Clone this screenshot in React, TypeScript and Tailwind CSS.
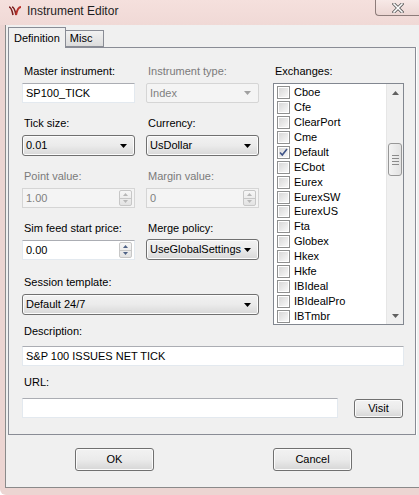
import type { ReactNode } from 'react';

const exchanges = [
  'Cboe', 'Cfe', 'ClearPort', 'Cme', 'Default', 'ECbot', 'Eurex', 'EurexSW',
  'EurexUS', 'Fta', 'Globex', 'Hkex', 'Hkfe', 'IBIdeal', 'IBIdealPro', 'IBTmbr',
];

function Arrow({ disabled }: { disabled?: boolean }) {
  return (
    <svg width="7" height="4" viewBox="0 0 7 4" className="shrink-0">
      <path d="M0 0h7L3.5 4z" fill={disabled ? '#a0a0a0' : '#000'} />
    </svg>
  );
}

function Label({ children, className = '' }: { children: ReactNode; className?: string }) {
  return <div className={`h-[14px] leading-[14px] pl-[2px] ${className}`}>{children}</div>;
}

function Combo({ value, width = 'w-[113px]', disabled }: { value: string; width?: string; disabled?: boolean }) {
  if (disabled) {
    return (
      <div className={`${width} h-[20px] flex items-center justify-between pl-[3px] pr-[7px] border border-[#d5d5d5] bg-[#f4f4f4] rounded-[2px] text-[#808080]`}>
        <span>{value}</span>
        <Arrow disabled />
      </div>
    );
  }
  return (
    <div className={`${width} h-[21px] flex items-center justify-between pl-[3px] pr-[7px] border border-[#707070] rounded-[3px] bg-gradient-to-b from-[#f2f2f2] via-[#ebebeb] to-[#d8d8d8] shadow-[inset_0_0_0_1px_#fcfcfc]`}>
      <span>{value}</span>
      <Arrow />
    </div>
  );
}

function TextBox({ value = '', width }: { value?: string; width: string }) {
  return (
    <div className={`${width} h-[20px] flex items-center pl-[3px] bg-white border border-[#e3e9ef] border-t-[#abadb3]`}>
      {value}
    </div>
  );
}

function Spin({ value, disabled }: { value: string; disabled?: boolean }) {
  const c = disabled ? '#b8b8b8' : '#4d6185';
  return (
    <div className={`w-[113px] h-[20px] flex items-center justify-between pl-[3px] pr-[2px] border ${disabled ? 'border-[#d5d5d5] bg-[#f4f4f4] text-[#808080]' : 'border-[#e3e9ef] border-t-[#abadb3] bg-white'}`}>
      <span>{value}</span>
      <div className="w-[13px] h-[16px] flex flex-col border border-[#c7c7c7] rounded-[2px] bg-gradient-to-b from-[#f7f7f7] to-[#e3e3e3]">
        <div className="flex-1 flex items-center justify-center border-b border-[#c7c7c7]">
          <svg width="5" height="3" viewBox="0 0 5 3"><path d="M2.5 0L5 3H0z" fill={c} /></svg>
        </div>
        <div className="flex-1 flex items-center justify-center">
          <svg width="5" height="3" viewBox="0 0 5 3"><path d="M0 0h5L2.5 3z" fill={c} /></svg>
        </div>
      </div>
    </div>
  );
}

function Field({ label, children, disabled }: { label: string; children: ReactNode; disabled?: boolean }) {
  return (
    <div className="flex flex-col">
      <Label className={disabled ? 'text-[#7a7a7a]' : ''}>{label}</Label>
      <div className="mt-[5px]">{children}</div>
    </div>
  );
}

function CheckBox({ checked }: { checked?: boolean }) {
  return (
    <div className="w-[13px] h-[13px] border border-[#8e8f8f] bg-white p-[1px] shrink-0">
      <div className="w-full h-full bg-gradient-to-br from-[#d8d8d8] to-[#f8f8f8] flex items-center justify-center">
        {checked && (
          <svg width="9" height="9" viewBox="0 0 9 9">
            <path d="M1 4.5l2.3 2.6L8 1" stroke="#3f5488" strokeWidth="1.6" fill="none" />
          </svg>
        )}
      </div>
    </div>
  );
}

function Button({ children, className = '' }: { children: ReactNode; className?: string }) {
  return (
    <div className={`flex items-center justify-center border border-[#707070] rounded-[3px] bg-gradient-to-b from-[#f2f2f2] via-[#ebebeb] to-[#d6d6d6] shadow-[inset_0_0_0_1px_#fbfbfb] ${className}`}>
      {children}
    </div>
  );
}

function ScrollBar() {
  return (
    <div className="w-[17px] h-full flex flex-col bg-[#f0f0f0] border-l border-[#e6e6e6]">
      <div className="h-[17px] flex items-center justify-center">
        <svg width="7" height="4" viewBox="0 0 7 4"><path d="M3.5 0L7 4H0z" fill="#606060" /></svg>
      </div>
      <div className="h-[42px]" />
      <div className="h-[33px] mx-[1px] border border-[#979797] rounded-[3px] bg-gradient-to-r from-[#f3f3f3] to-[#e2e2e2] flex flex-col items-center justify-center gap-[2px]">
        <div className="w-[7px] h-px bg-[#8a8a8a]" />
        <div className="w-[7px] h-px bg-[#8a8a8a]" />
        <div className="w-[7px] h-px bg-[#8a8a8a]" />
        <div className="w-[7px] h-px bg-[#8a8a8a]" />
      </div>
      <div className="flex-1" />
      <div className="h-[17px] flex items-center justify-center">
        <svg width="7" height="4" viewBox="0 0 7 4"><path d="M0 0h7L3.5 4z" fill="#606060" /></svg>
      </div>
    </div>
  );
}

export default function App() {
  return (
    <div
      className="w-[419px] h-[495px] overflow-hidden flex flex-col bg-[#ecd5d2] rounded-bl-[6px] text-[11px] text-black"
      style={{ fontFamily: '"Liberation Sans", Arial, sans-serif' }}
    >
      {/* Title bar */}
      <div className="h-[25px] shrink-0 flex items-start bg-gradient-to-b from-[#f5e0dd] to-[#f0d9d6]">
        <div className="flex items-center h-[22px] pl-[8px] gap-[4px]">
          <svg width="15" height="12" viewBox="0 0 15 12">
            <path d="M1 2c2 0 3 3 4 8M4 2c2 0 3 3 4 8" stroke="#7a1f1f" strokeWidth="1.6" fill="none" />
            <path d="M8 10c1-5 2-8 5-8" stroke="#b8322b" strokeWidth="2" fill="none" />
          </svg>
          <span className="text-[12px] text-[#1e1e1e]">Instrument Editor</span>
        </div>
        <div className="ml-auto w-[44px] h-[16px] border-l border-b border-[#8d7c7a] rounded-bl-[4px] bg-gradient-to-b from-[#f7e9e7] to-[#ecd6d3] flex items-center justify-center">
          <svg width="12" height="10" viewBox="0 0 12 10">
            <path d="M2 1l8 8M10 1l-8 8" stroke="#5a5a5a" strokeWidth="3.2" strokeLinecap="square" />
            <path d="M2 1l8 8M10 1l-8 8" stroke="#fff" strokeWidth="1.6" strokeLinecap="square" />
          </svg>
        </div>
      </div>

      {/* Client area */}
      <div className="ml-[5px] h-[463px] flex flex-col bg-[#f0f0f0] border-l border-b border-[#8a8a8a]">
        {/* Tabs */}
        <div className="flex items-end h-[22px] pl-[2px] pt-[2px]">
          <div className="h-[21px] px-[5px] flex items-center bg-[#f0f0f0] border border-b-0 border-[#898c95] relative z-10 -mb-px">
            Definition
          </div>
          <div className="h-[17px] w-[38px] pl-[4px] flex items-center border border-l-0 border-[#898c95] bg-gradient-to-b from-[#f2f2f2] to-[#dcdcdc]">
            Misc
          </div>
        </div>

        {/* Panel */}
        <div className="ml-[2px] w-[408px] h-[388px] border border-[#898c95] shadow-[1px_0_0_#ffffff] pl-[13px] pt-[16px]">
          <div className="flex h-[259px]">
            <div className="w-[237px] flex flex-col gap-[13px]">
              <div className="flex gap-[11px]">
                <Field label="Master instrument:">
                  <TextBox value="SP100_TICK" width="w-[113px]" />
                </Field>
                <Field label="Instrument type:" disabled>
                  <Combo value="Index" disabled />
                </Field>
              </div>
              <div className="flex gap-[11px]">
                <Field label="Tick size:">
                  <Combo value="0.01" />
                </Field>
                <Field label="Currency:">
                  <Combo value="UsDollar" />
                </Field>
              </div>
              <div className="flex gap-[11px]">
                <Field label="Point value:" disabled>
                  <Spin value="1.00" disabled />
                </Field>
                <Field label="Margin value:" disabled>
                  <Spin value="0" disabled />
                </Field>
              </div>
              <div className="flex gap-[11px]">
                <Field label="Sim feed start price:">
                  <Spin value="0.00" />
                </Field>
                <Field label="Merge policy:">
                  <div className="-mt-[1px]">
                    <Combo value="UseGlobalSettings" />
                  </div>
                </Field>
              </div>
              <div className="flex flex-col pt-[2px]">
                <Label>Session template:</Label>
                <div className="mt-[5px]">
                  <Combo value="Default 24/7" width="w-[237px]" />
                </div>
              </div>
            </div>

            <div className="ml-[14px] flex flex-col">
              <Label>Exchanges:</Label>
              <div className="mt-[5px] w-[131px] h-[242px] bg-white border border-[#828790] flex">
                <div className="flex-1 flex flex-col pt-[1px]">
                  {exchanges.map((name) => (
                    <div key={name} className="h-[15px] flex items-center pl-[3px] gap-[4px] leading-none">
                      <CheckBox checked={name === 'Default'} />
                      <span>{name}</span>
                    </div>
                  ))}
                </div>
                <ScrollBar />
              </div>
            </div>
          </div>

          <Label className="mt-[1px]">Description:</Label>
          <div className="mt-[8px]">
            <TextBox value="S&P 100 ISSUES NET TICK" width="w-[382px]" />
          </div>
          <Label className="mt-[9px]">URL:</Label>
          <div className="mt-[8px] flex items-center">
            <TextBox width="w-[316px]" />
            <Button className="ml-[16px] w-[49px] h-[19px] mt-[2px]">Visit</Button>
          </div>
        </div>

        {/* Dialog buttons */}
        <div className="flex-1 flex items-center pb-[4px]">
          <Button className="ml-[69px] w-[79px] h-[23px]">OK</Button>
          <Button className="ml-[119px] w-[79px] h-[23px]">Cancel</Button>
        </div>
      </div>
    </div>
  );
}
